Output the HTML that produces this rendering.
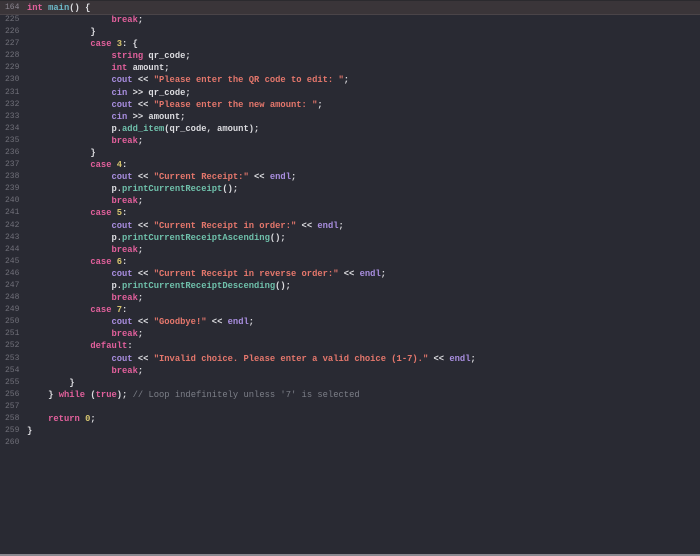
<!DOCTYPE html>
<html><head><meta charset="utf-8"><style>
html,body{margin:0;padding:0}
body{width:700px;height:556px;background:#292a33;position:relative;overflow:hidden;font-family:"Liberation Mono",monospace;font-size:8.8px;font-weight:bold;color:#dcdce0}
.hdr{position:absolute;left:0;top:0;width:700px;height:15px;background:#3a3539;border-top:1px solid #2b2a2e;border-bottom:1px solid #4a4448;box-sizing:border-box}
.bot{position:absolute;left:0;top:554px;width:700px;height:2px;background:#8a8890}
.ln{position:absolute;left:5px;color:#6f6f78;font-weight:normal;font-size:8px;white-space:pre}
.cd{position:absolute;left:27px;white-space:pre}
.k{color:#e2609c}.s{color:#e5776c}.n{color:#d5c46f}.c{color:#a98ee0}.f{color:#6fc0ab}.m{color:#6cb8c8}.cm{color:#7c7f88;font-weight:normal}
</style></head><body>
<div class="hdr"></div>
<div class="ln" style="top:3px;color:#8a8590">164</div>
<div class="cd" style="top:3px"><span class="k">int</span> <span class="m">main</span>() {</div>
<div id="w"></div>
<script>
var L=[
'                <span class="k">break</span>;',
'            }',
'            <span class="k">case</span> <span class="n">3</span>: {',
'                <span class="k">string</span> qr_code;',
'                <span class="k">int</span> amount;',
'                <span class="c">cout</span> &lt;&lt; <span class="s">"Please enter the QR code to edit: "</span>;',
'                <span class="c">cin</span> &gt;&gt; qr_code;',
'                <span class="c">cout</span> &lt;&lt; <span class="s">"Please enter the new amount: "</span>;',
'                <span class="c">cin</span> &gt;&gt; amount;',
'                p.<span class="f">add_item</span>(qr_code, amount);',
'                <span class="k">break</span>;',
'            }',
'            <span class="k">case</span> <span class="n">4</span>:',
'                <span class="c">cout</span> &lt;&lt; <span class="s">"Current Receipt:"</span> &lt;&lt; <span class="c">endl</span>;',
'                p.<span class="f">printCurrentReceipt</span>();',
'                <span class="k">break</span>;',
'            <span class="k">case</span> <span class="n">5</span>:',
'                <span class="c">cout</span> &lt;&lt; <span class="s">"Current Receipt in order:"</span> &lt;&lt; <span class="c">endl</span>;',
'                p.<span class="f">printCurrentReceiptAscending</span>();',
'                <span class="k">break</span>;',
'            <span class="k">case</span> <span class="n">6</span>:',
'                <span class="c">cout</span> &lt;&lt; <span class="s">"Current Receipt in reverse order:"</span> &lt;&lt; <span class="c">endl</span>;',
'                p.<span class="f">printCurrentReceiptDescending</span>();',
'                <span class="k">break</span>;',
'            <span class="k">case</span> <span class="n">7</span>:',
'                <span class="c">cout</span> &lt;&lt; <span class="s">"Goodbye!"</span> &lt;&lt; <span class="c">endl</span>;',
'                <span class="k">break</span>;',
'            <span class="k">default</span>:',
'                <span class="c">cout</span> &lt;&lt; <span class="s">"Invalid choice. Please enter a valid choice (1-7)."</span> &lt;&lt; <span class="c">endl</span>;',
'                <span class="k">break</span>;',
'        }',
'    } <span class="k">while</span> (<span class="k">true</span>); <span class="cm">// Loop indefinitely unless \'7\' is selected</span>',
'',
'    <span class="k">return</span> <span class="n">0</span>;',
'}',
''];
var h='';
for(var i=0;i<L.length;i++){var t=(15+i*12.09).toFixed(2);
h+='<div class="ln" style="top:'+t+'px">'+(225+i)+'</div><div class="cd" style="top:'+t+'px">'+L[i]+'</div>';}
document.getElementById('w').innerHTML=h;
</script>
<div class="bot"></div>
</body></html>
